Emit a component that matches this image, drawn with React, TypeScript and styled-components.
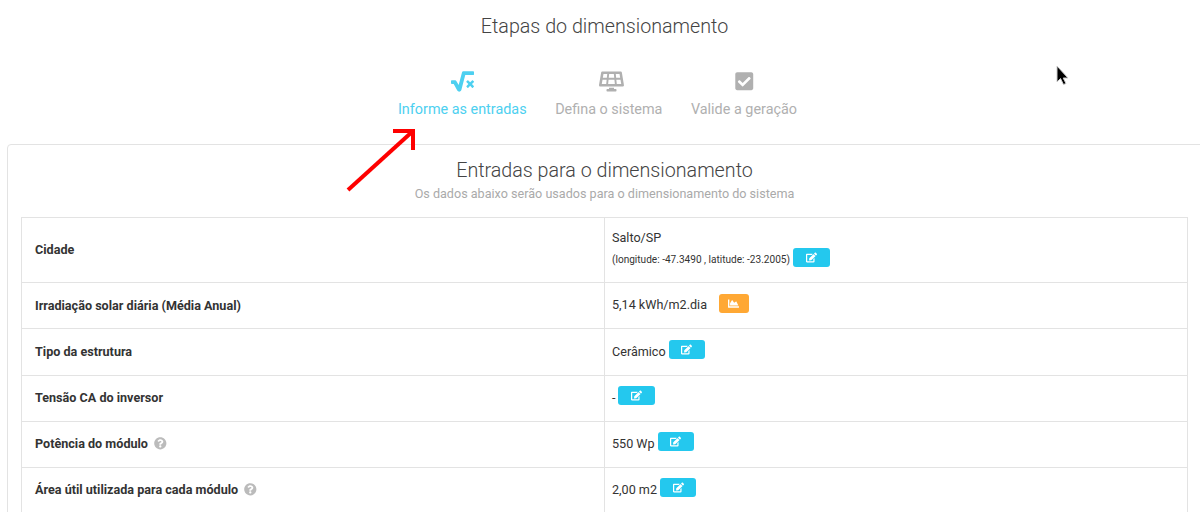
import React from "react";
import styled, { createGlobalStyle } from "styled-components";
import { FaSquareRootAlt, FaSolarPanel, FaCheckSquare, FaEdit, FaChartArea, FaQuestionCircle } from "react-icons/fa";

const Global = createGlobalStyle`
  html, body { margin: 0; padding: 0; background: #fff; overflow: hidden; height: 512px; }
  body { font-family: Roboto, "Liberation Sans", sans-serif; color: #333; }
`;

const Page = styled.div`
  position: relative;
  width: 1200px;
  height: 512px;
  overflow: hidden;
  padding-top: 14px;
  box-sizing: border-box;
`;
const Heading = styled.h2`
  margin: 0;
  padding-left: 9px;
  font-size: 19.7px;
  font-weight: 300;
  line-height: 26px;
  color: #444;
  text-align: center;
`;
const Steps = styled.div`
  display: flex;
  justify-content: center;
  gap: 28.5px;
  margin-top: 28px;
  padding-right: 5px;
  height: 76px;
`;
const Step = styled.div<{ $active?: boolean }>`
  display: flex;
  flex-direction: column;
  align-items: center;
  color: ${(p) => (p.$active ? "#4dd0f0" : "#b0b0b0")};
  font-size: 14.4px;
  line-height: 20px;
`;
const StepIcon = styled.div<{ $size: number; $shift?: number }>`
  display: flex;
  align-items: center;
  justify-content: center;
  height: 24px;
  font-size: ${(p) => p.$size}px;
  margin: 1px 0 7px ${(p) => p.$shift ?? 0}px;
`;
const Card = styled.section`
  margin-left: 7px;
  width: 1220px;
  height: 400px;
  border: 1px solid #e3e3e3;
  border-radius: 4px 0 0 0;
  box-sizing: border-box;
  padding: 14px 13px 0;
`;
const CardInner = styled.div`
  width: 1167px;
`;
const CardTitle = styled.h3`
  margin: 0;
  font-size: 19.7px;
  font-weight: 300;
  line-height: 24px;
  color: #444;
  text-align: center;
`;
const CardSub = styled.p`
  margin: 3px 0 15px;
  font-size: 12.6px;
  font-weight: 400;
  line-height: 16px;
  color: #aaa;
  text-align: center;
`;
const Table = styled.div`
  border: 1px solid #e3e3e3;
  border-bottom: 0;
`;
const Row = styled.div<{ $h: number; $lift?: boolean }>`
  display: grid;
  grid-template-columns: 583px 1fr;
  height: ${(p) => p.$h}px;
  box-sizing: border-box;
  border-bottom: 1px solid #e3e3e3;
`;
const Label = styled.div<{ $lift?: boolean }>`
  display: flex;
  align-items: center;
  gap: 6px;
  padding: 0 0 ${(p) => (p.$lift ? 2 : 1)}px 13px;
  font-size: 12.6px;
  font-weight: 700;
  color: #333;
  border-right: 1px solid #e3e3e3;
  svg { color: #bbb; font-size: 12.6px; }
`;
const Value = styled.div<{ $lift?: boolean }>`
  padding: 0 0 ${(p) => (p.$lift ? 2 : 1)}px 7px;
  font-size: 12.6px;
  color: #333;
  display: flex;
  flex-direction: column;
  justify-content: center;
`;
const Line = styled.div`
  display: flex;
  align-items: center;
  gap: 3px;
  line-height: 20px;
`;
const Small = styled.span`
  font-size: 10.08px;
`;
const Btn = styled.button<{ $orange?: boolean }>`
  display: inline-flex;
  align-items: center;
  justify-content: center;
  width: ${(p) => (p.$orange ? 30 : 36.5)}px;
  height: 19px;
  margin: 0 0 4px ${(p) => (p.$orange ? 9 : 0)}px;
  padding: 0;
  border: 0;
  border-radius: 3px;
  background: ${(p) => (p.$orange ? "#ffa834" : "#24c8ee")};
  color: #fff;
  font-size: 11px;
`;
const RedArrow = styled.svg`
  position: absolute;
  left: 340px;
  top: 124px;
`;
const Cursor = styled.svg`
  position: absolute;
  left: 1054px;
  top: 63px;
`;

const rows = [
  { h: 65, label: "Cidade" },
  { h: 46, label: "Irradiação solar diária (Média Anual)" },
  { h: 47, label: "Tipo da estrutura" },
  { h: 46, label: "Tensão CA do inversor", lift: true },
  { h: 46, label: "Potência do módulo", help: true, lift: true },
  { h: 46, label: "Área útil utilizada para cada módulo", help: true, lift: true },
];

const values: React.ReactNode[] = [
  <>
    <Line>Salto/SP</Line>
    <Line><Small>(longitude: -47.3490 , latitude: -23.2005)</Small><Btn><FaEdit /></Btn></Line>
  </>,
  <Line>5,14 kWh/m2.dia <Btn $orange><FaChartArea /></Btn></Line>,
  <Line>Cerâmico <Btn><FaEdit /></Btn></Line>,
  <Line>- <Btn><FaEdit /></Btn></Line>,
  <Line>550 Wp <Btn><FaEdit /></Btn></Line>,
  <Line>2,00 m2 <Btn><FaEdit /></Btn></Line>,
];

export default function App() {
  return (
    <Page>
      <Global />
      <Heading>Etapas do dimensionamento</Heading>
      <Steps>
        <Step $active><StepIcon $size={23}><FaSquareRootAlt /></StepIcon>Informe as entradas</Step>
        <Step><StepIcon $size={25} $shift={5}><FaSolarPanel /></StepIcon>Defina o sistema</Step>
        <Step><StepIcon $size={20.5}><FaCheckSquare /></StepIcon>Valide a geração</Step>
      </Steps>
      <Card>
        <CardInner>
          <CardTitle>Entradas para o dimensionamento</CardTitle>
          <CardSub>Os dados abaixo serão usados para o dimensionamento do sistema</CardSub>
          <Table>
            {rows.map((r, i) => (
              <Row key={r.label} $h={r.h}>
                <Label $lift={r.lift}>{r.label}{r.help && <FaQuestionCircle />}</Label>
                <Value $lift={r.lift}>{values[i]}</Value>
              </Row>
            ))}
          </Table>
        </CardInner>
      </Card>
      <RedArrow width="80" height="72" viewBox="0 0 80 72" fill="none" stroke="#fe0000" strokeWidth="4">
        <path d="M8 66 L73 7" />
        <path d="M53 7 L73 7 L73 26" />
      </RedArrow>
      <Cursor width="18" height="24" viewBox="0 0 18 24">
        <path d="M3 3 L3 19 L6.5 15.5 L9.5 21.5 L12 20.5 L9.2 15 L14 15 Z" fill="#000" stroke="#ccc" strokeWidth="1" />
      </Cursor>
    </Page>
  );
}
